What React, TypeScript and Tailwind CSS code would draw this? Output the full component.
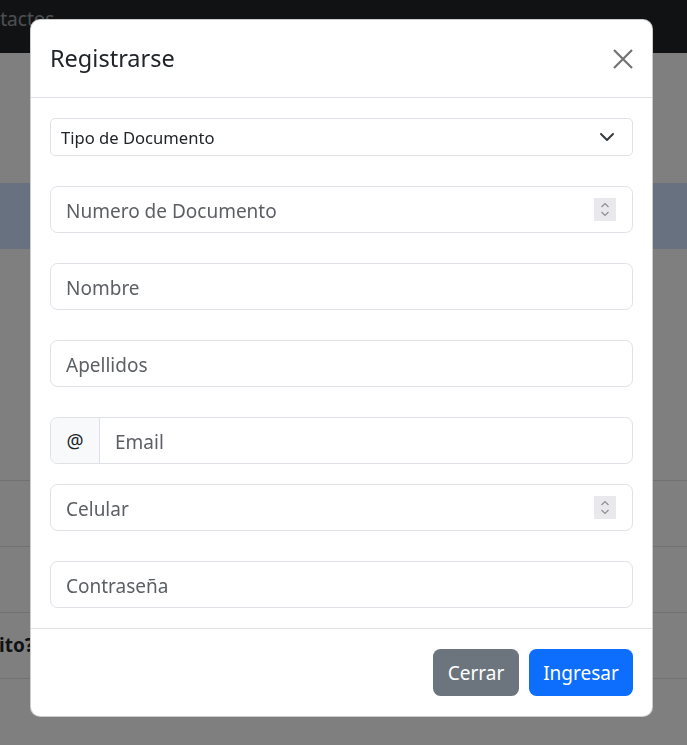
import React from "react";

function Spinner() {
  return (
    <div className="w-[22px] h-[23px] bg-[#e9e9ed] flex items-center justify-center shrink-0">
      <svg width="22" height="23" viewBox="0 0 22 23" fill="none">
        <path d="M7.5 9 L11 5.5 L14.5 9" stroke="#8e8e93" strokeWidth="1.2" />
        <path d="M7.5 14 L11 17.5 L14.5 14" stroke="#8e8e93" strokeWidth="1.2" />
      </svg>
    </div>
  );
}

function Field({ placeholder, spinner, last }: { placeholder: string; spinner?: boolean; last?: boolean }) {
  return (
    <div
      className={`flex items-center h-[47px] border border-[#dee2e6] rounded-[7.5px] pl-[15px] pr-[16px] bg-white ${
        last ? "" : "mb-[30px]"
      }`}
    >
      <input
        placeholder={placeholder}
        className="flex-1 min-w-0 pt-[2px] bg-transparent outline-none text-[19px] leading-[30px] text-[#212529] placeholder:text-[#5c5f63]"
      />
      {spinner && <Spinner />}
    </div>
  );
}

export default function App() {
  return (
    <div className="relative min-h-[745px] overflow-hidden bg-white font-['Noto_Sans','Open_Sans',sans-serif] text-[#212529]">
      <nav className="h-[53px] bg-[#212529] flex items-start pt-[7px]">
        <span className="ml-[-35px] text-[19px] leading-[24px] text-white/55 whitespace-nowrap">Contactos</span>
      </nav>
      <div className="h-[130px]" />
      <div className="h-[66px] bg-[#cfe2ff]" />
      <div className="h-[231px]" />
      <div className="h-[66px] border-t border-[#dee2e6]" />
      <div className="h-[66px] border-t border-[#dee2e6]" />
      <div className="h-[66px] border-t border-[#dee2e6] flex items-center">
        <span className="ml-[-1px] text-[19px] font-bold text-[#212529]">ito?</span>
      </div>
      <div className="h-[67px] border-t border-[#dee2e6]" />

      <div className="fixed inset-0 bg-black/50" />

      <div className="absolute top-[19px] left-[30px] w-[623px] bg-white rounded-[10px] border border-black/20 flex flex-col">
        <div className="flex items-center justify-between px-[19px] py-[20px] border-b border-[#dee2e6]">
          <h5 className="text-[23.5px] leading-[37px] font-normal text-[#212529]">Registrarse</h5>
          <button className="w-[20px] h-[20px] flex items-center justify-center" aria-label="Close">
            <svg width="20" height="20" viewBox="0 0 20 20" fill="none">
              <path d="M1 1 L19 19 M19 1 L1 19" stroke="#737373" strokeWidth="2.2" />
            </svg>
          </button>
        </div>

        <div className="px-[19px] pt-[20px] pb-[20px] flex flex-col">
          <div className="flex items-center justify-between h-[38px] border border-[#dee2e6] rounded-[5px] pl-[10px] pr-[17px] mb-[30px]">
            <span className="text-[16.6px] leading-[26px] pt-[1px] text-[#212529]">Tipo de Documento</span>
            <svg width="16" height="16" viewBox="0 0 16 16" fill="none">
              <path d="M2 5 L8 11 L14 5" stroke="#343a40" strokeWidth="2" strokeLinecap="round" strokeLinejoin="round" />
            </svg>
          </div>

          <Field placeholder="Numero de Documento" spinner />
          <Field placeholder="Nombre" />
          <Field placeholder="Apellidos" />

          <div className="flex h-[47px] border border-[#dee2e6] rounded-[7.5px] mb-[20px] overflow-hidden">
            <span className="w-[49px] shrink-0 bg-[#f8f9fa] border-r border-[#dee2e6] flex items-center justify-center pt-[2px] text-[19px] text-[#212529]">
              @
            </span>
            <input
              placeholder="Email"
              className="flex-1 min-w-0 pl-[15px] pt-[2px] bg-transparent outline-none text-[19px] leading-[30px] text-[#212529] placeholder:text-[#5c5f63]"
            />
          </div>

          <Field placeholder="Celular" spinner />
          <Field placeholder="Contraseña" last />
        </div>

        <div className="flex justify-end items-center p-[15px] border-t border-[#dee2e6]">
          <button className="m-[5px] w-[86px] h-[47px] pt-[2px] rounded-[7.5px] bg-[#6c757d] text-white text-[19px]">
            Cerrar
          </button>
          <button className="m-[5px] mr-[4px] w-[104px] h-[47px] pt-[2px] rounded-[7.5px] bg-[#0d6efd] text-white text-[19px]">
            Ingresar
          </button>
        </div>
      </div>
    </div>
  );
}
